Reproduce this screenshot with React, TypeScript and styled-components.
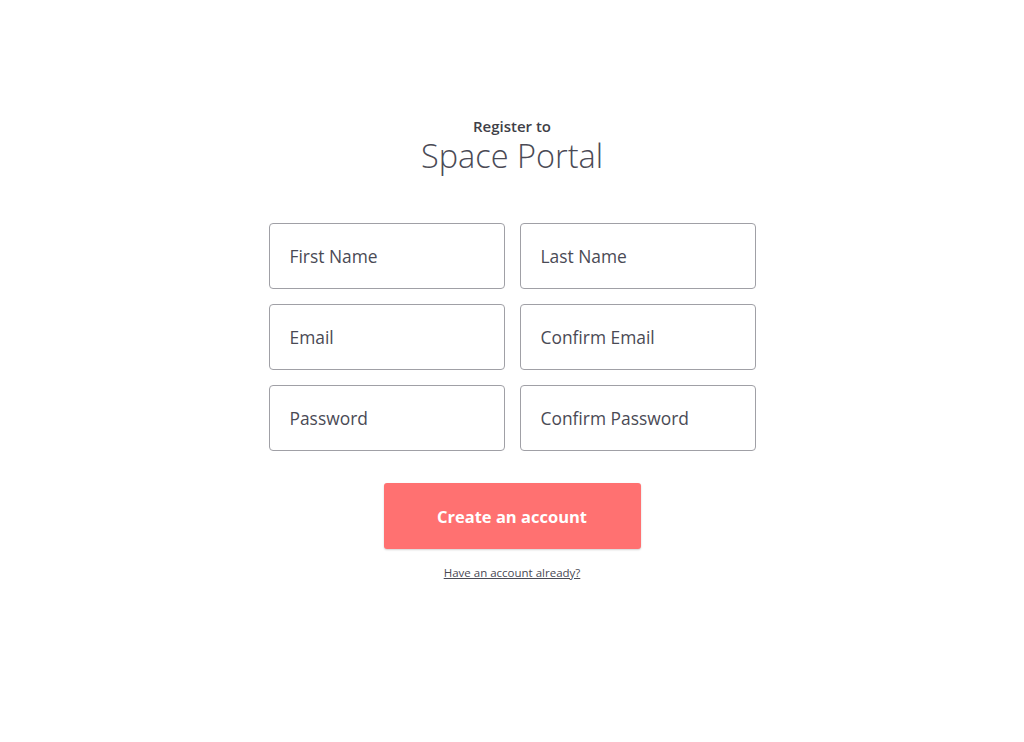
import React from "react";
import styled, { createGlobalStyle } from "styled-components";

const Global = createGlobalStyle`
  html, body { margin: 0; padding: 0; background: #ffffff; }
  body { font-family: "Open Sans", "Noto Sans", sans-serif; color: #4a4a55; }
  * { box-sizing: border-box; }
`;

const Page = styled.main`
  display: flex;
  flex-direction: column;
  align-items: center;
  padding-top: 117px;
  min-height: 742px;
`;

const Kicker = styled.div`
  font-size: 15px;
  line-height: 18px;
  font-weight: 600;
  color: #3f3f48;
`;

const Title = styled.h1`
  margin: 3px 0 0;
  font-size: 32.5px;
  line-height: 36px;
  font-weight: 300;
  color: #4a4a55;
`;

const Form = styled.form`
  margin-top: 49px;
  display: flex;
  flex-direction: column;
  align-items: center;
`;

const Grid = styled.div`
  display: grid;
  grid-template-columns: 236px 236px;
  column-gap: 15px;
  row-gap: 15px;
`;

const Field = styled.input`
  width: 100%;
  height: 66px;
  border: 1px solid #a0a0a6;
  border-radius: 4px;
  padding: 0 20px;
  font-family: "Open Sans", "Noto Sans", sans-serif;
  font-size: 17.4px;
  color: #4a4a55;
  background: #fff;
  outline: none;
  &::placeholder { color: #4a4a55; opacity: 1; }
`;

const Submit = styled.button`
  margin-top: 32px;
  width: 257px;
  height: 66px;
  border: none;
  border-radius: 3px;
  background: #ff7171;
  box-shadow: 0 1px 2px rgba(0, 0, 0, 0.18);
  color: #ffffff;
  font-family: "Open Sans", "Noto Sans", sans-serif;
  font-size: 16.5px;
  font-weight: 700;
  cursor: pointer;
`;

const LoginLink = styled.a`
  margin-top: 16px;
  font-size: 11.5px;
  line-height: 16px;
  color: #4a4a55;
  text-decoration: underline;
`;

const fields = [
  "First Name",
  "Last Name",
  "Email",
  "Confirm Email",
  "Password",
  "Confirm Password",
];

export default function App() {
  return (
    <>
      <Global />
      <Page>
        <Kicker>Register to</Kicker>
        <Title>Space Portal</Title>
        <Form onSubmit={(e) => e.preventDefault()}>
          <Grid>
            {fields.map((f) => (
              <Field
                key={f}
                placeholder={f}
                type={f.includes("Password") ? "password" : f.includes("Email") ? "email" : "text"}
              />
            ))}
          </Grid>
          <Submit type="submit">Create an account</Submit>
          <LoginLink href="#">Have an account already?</LoginLink>
        </Form>
      </Page>
    </>
  );
}
